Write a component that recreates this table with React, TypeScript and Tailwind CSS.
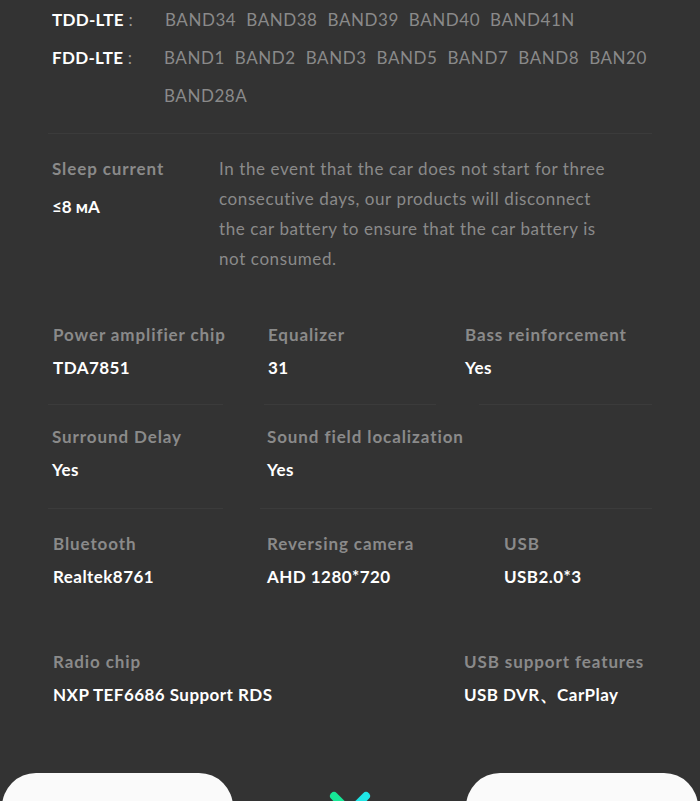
import React from "react";

const TDD = ["BAND34", "BAND38", "BAND39", "BAND40", "BAND41N"];
const FDD = ["BAND1", "BAND2", "BAND3", "BAND5", "BAND7", "BAND8", "BAN20", "BAND28A"];

type Spec = { label: string; value: string; w?: string };

function Cell({ label, value, w }: Spec) {
  return (
    <div className={`${w ?? "flex-1"} shrink-0`}>
      <div className="text-[17px] font-bold leading-[24px] tracking-[0.9px] text-[#8a8a8a]">{label}</div>
      <div className="mt-[9px] text-[17px] font-bold leading-[24px] tracking-[0.45px] text-white">{value}</div>
    </div>
  );
}

function Line({ w, ml }: { w: string; ml?: string }) {
  return <div className={`h-px bg-[#3b3b3b] ${w} ${ml ?? ""}`} />;
}

export default function App() {
  return (
    <div
      className="relative h-[801px] w-[700px] overflow-hidden bg-[#333333]"
      style={{ fontFamily: "Lato, 'Open Sans', sans-serif" }}
    >
      <div className="mx-[48px]">
        {/* network bands */}
        <div className="pl-[4px] pt-px text-[17px] leading-[38px]">
          <div className="flex">
            <div className="w-[113px] shrink-0 font-bold tracking-[0.3px] text-white">
              TDD-LTE<span className="font-normal text-[#9a9a9a]"> :</span>
            </div>
            <div className="flex flex-wrap gap-x-[10px] tracking-[0.55px] text-[#8a8a8a]">
              {TDD.map((b) => (
                <span key={b}>{b}</span>
              ))}
            </div>
          </div>
          <div className="flex">
            <div className="w-[112px] shrink-0 font-bold tracking-[0.3px] text-white">
              FDD-LTE<span className="font-normal text-[#9a9a9a]"> :</span>
            </div>
            <div className="flex w-[490px] flex-wrap gap-x-[10px] tracking-[0.55px] text-[#8a8a8a]">
              {FDD.map((b) => (
                <span key={b}>{b}</span>
              ))}
            </div>
          </div>
        </div>

        <div className="mt-[18px] h-px bg-[#3b3b3b]" />

        {/* sleep current */}
        <div className="flex pl-[4px] pt-[20px]">
          <div className="w-[167px] shrink-0">
            <div className="text-[17px] font-bold leading-[30px] tracking-[0.9px] text-[#8a8a8a]">
              Sleep current
            </div>
            <div className="mt-[8px] text-[17px] font-bold leading-[30px] text-white">≤8 мA</div>
          </div>
          <p className="w-[400px] text-[17px] leading-[30px] tracking-[0.6px] text-[#8a8a8a]">
            In the event that the car does not start for three consecutive days, our products will
            disconnect the car battery to ensure that the car battery is not consumed.
          </p>
        </div>

        {/* spec grid */}
        <div className="mt-[49px] flex pl-[5px]">
          <Cell label="Power amplifier chip" value="TDA7851" w="w-[215px]" />
          <Cell label="Equalizer" value="31" w="w-[197px]" />
          <Cell label="Bass reinforcement" value="Yes" />
        </div>
        <div className="mt-[24px] flex">
          <Line w="w-[176px]" />
          <Line w="w-[173px]" ml="ml-[41px]" />
          <Line w="w-[174px]" ml="ml-[43px]" />
        </div>

        <div className="mt-[20px] flex pl-[4px]">
          <Cell label="Surround Delay" value="Yes" w="w-[215px]" />
          <Cell label="Sound field localization" value="Yes" />
        </div>
        <div className="mt-[26px] flex">
          <Line w="w-[176px]" />
          <Line w="w-[394px]" ml="ml-[37px]" />
        </div>

        <div className="mt-[23px] flex pl-[5px]">
          <Cell label="Bluetooth" value="Realtek8761" w="w-[214px]" />
          <Cell label="Reversing camera" value="AHD 1280*720" w="w-[237px]" />
          <Cell label="USB" value="USB2.0*3" />
        </div>

        <div className="mt-[61px] flex pl-[5px]">
          <Cell label="Radio chip" value="NXP TEF6686 Support RDS" w="w-[411px]" />
          <Cell label="USB support features" value="USB DVR、CarPlay" />
        </div>
      </div>

      {/* bottom cards */}
      <div className="absolute left-0 right-0 top-[773px] flex items-start">
        <div className="ml-[2px] h-[80px] w-[231px] rounded-t-[34px] bg-[#fafafa]" />
        <div className="flex flex-1 justify-center pt-[17px]">
          <svg width="44" height="14" viewBox="0 0 44 14">
            <line x1="6" y1="6" x2="16" y2="16" stroke="#17e897" strokeWidth="8" strokeLinecap="round" />
            <line x1="38" y1="6" x2="28" y2="16" stroke="#1fe6e6" strokeWidth="8" strokeLinecap="round" />
          </svg>
        </div>
        <div className="mr-[2px] h-[80px] w-[232px] rounded-t-[34px] bg-[#fafafa]" />
      </div>
    </div>
  );
}
